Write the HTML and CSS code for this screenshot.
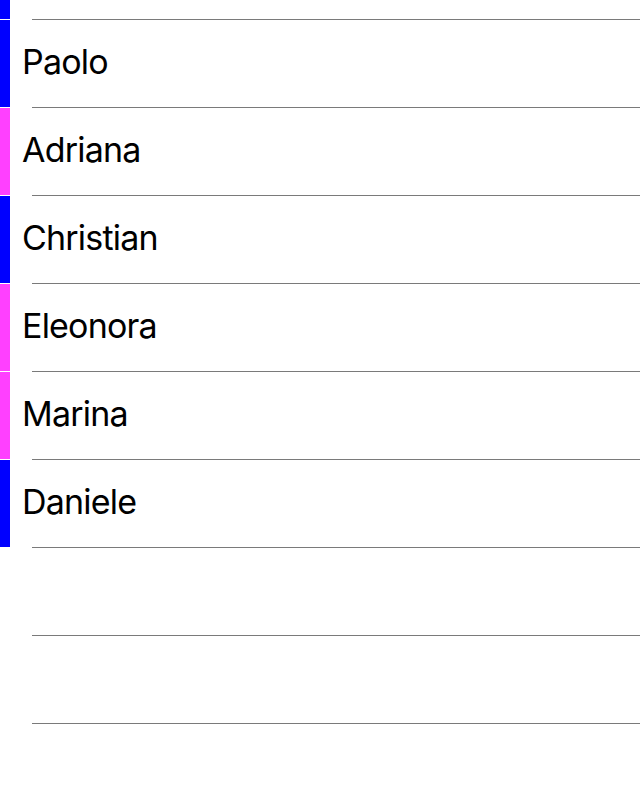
FILE: index.html
```html
<!DOCTYPE html>
<html>
<head>
<meta charset="utf-8">
<link rel="stylesheet" href="styles.css">
</head>
<body>
<div class="list">
  <div class="row row-partial"><div class="strip male"></div><div class="name"></div></div>
  <div class="sep"></div>
  <div class="row"><div class="strip male"></div><div class="name">Paolo</div></div>
  <div class="sep"></div>
  <div class="row"><div class="strip female"></div><div class="name">Adriana</div></div>
  <div class="sep"></div>
  <div class="row"><div class="strip male"></div><div class="name">Christian</div></div>
  <div class="sep"></div>
  <div class="row"><div class="strip female"></div><div class="name">Eleonora</div></div>
  <div class="sep"></div>
  <div class="row"><div class="strip female"></div><div class="name">Marina</div></div>
  <div class="sep"></div>
  <div class="row"><div class="strip male"></div><div class="name">Daniele</div></div>
  <div class="sep"></div>
  <div class="row"><div class="strip"></div><div class="name"></div></div>
  <div class="sep"></div>
  <div class="row"><div class="strip"></div><div class="name"></div></div>
  <div class="sep"></div>
</div>
</body>
</html>
```
FILE: styles.css
```css
html, body {
  margin: 0;
  padding: 0;
  background: #ffffff;
}
body {
  width: 640px;
  height: 800px;
  overflow: hidden;
  font-family: Inter, "Noto Sans", "Liberation Sans", sans-serif;
  color: #000000;
}
.list {
  display: flex;
  flex-direction: column;
}
.row {
  display: flex;
  align-items: center;
  height: 87px;
}
.row-partial {
  height: 19px;
}
.strip {
  align-self: stretch;
  width: 10px;
  flex: none;
}
.strip.male {
  background: #0000ff;
}
.strip.female {
  background: #ff40ff;
}
.name {
  padding-left: 12px;
  padding-bottom: 4px;
  font-size: 34px;
  letter-spacing: -0.8px;
  line-height: 40px;
}
.sep {
  height: 1px;
  margin-left: 32px;
  background: #7a7a7a;
}
```
